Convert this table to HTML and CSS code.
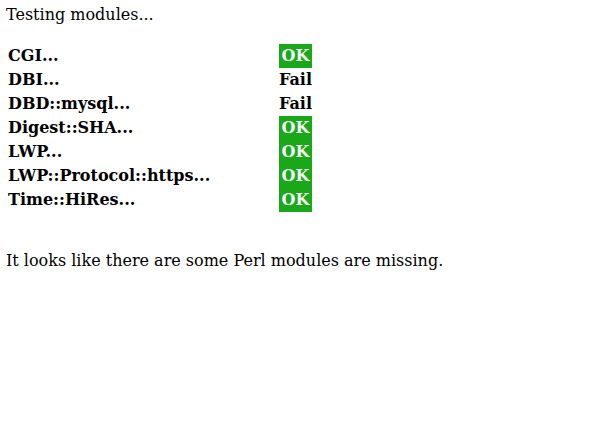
FILE: index.html
```html
<!DOCTYPE html>
<html lang="en">
<head>
  <meta charset="UTF-8">
  <title>Module check</title>
  <link rel="stylesheet" href="styles.css">
</head>
<body>
  <p class="intro">Testing modules...</p>

  <!-- Module results -->
  <table class="modules">
    <tr><td class="name">CGI...</td><td class="status ok">OK</td></tr>
    <tr><td class="name">DBI...</td><td class="status">Fail</td></tr>
    <tr><td class="name">DBD::mysql...</td><td class="status">Fail</td></tr>
    <tr><td class="name">Digest::SHA...</td><td class="status ok">OK</td></tr>
    <tr><td class="name">LWP...</td><td class="status ok">OK</td></tr>
    <tr><td class="name">LWP::Protocol::https...</td><td class="status ok">OK</td></tr>
    <tr><td class="name">Time::HiRes...</td><td class="status ok">OK</td></tr>
  </table>

  <p class="result">It looks like there are some Perl modules are missing.</p>
</body>
</html>
```

FILE: styles.css
```css
/* General */
body {
  margin: 0;
  padding: 5px 6px;
  background-color: #fff;
  color: #000;
  font-family: "DejaVu Serif", serif;
  font-size: 16px;
}
p {
  margin: 0;
}
.intro {
  margin-bottom: 20px;
}

/* Results table */
.modules {
  border-collapse: collapse;
}
.modules td {
  padding: 2px;
  line-height: 20px;
  font-weight: bold;
}
.modules .name {
  width: 269px;
}
.modules .status {
  padding: 2px 0;
  text-align: center;
}
.modules .ok {
  background-color: #18a818;
  color: #f4f4f4;
}

.result {
  margin-top: 39px;
}
```
